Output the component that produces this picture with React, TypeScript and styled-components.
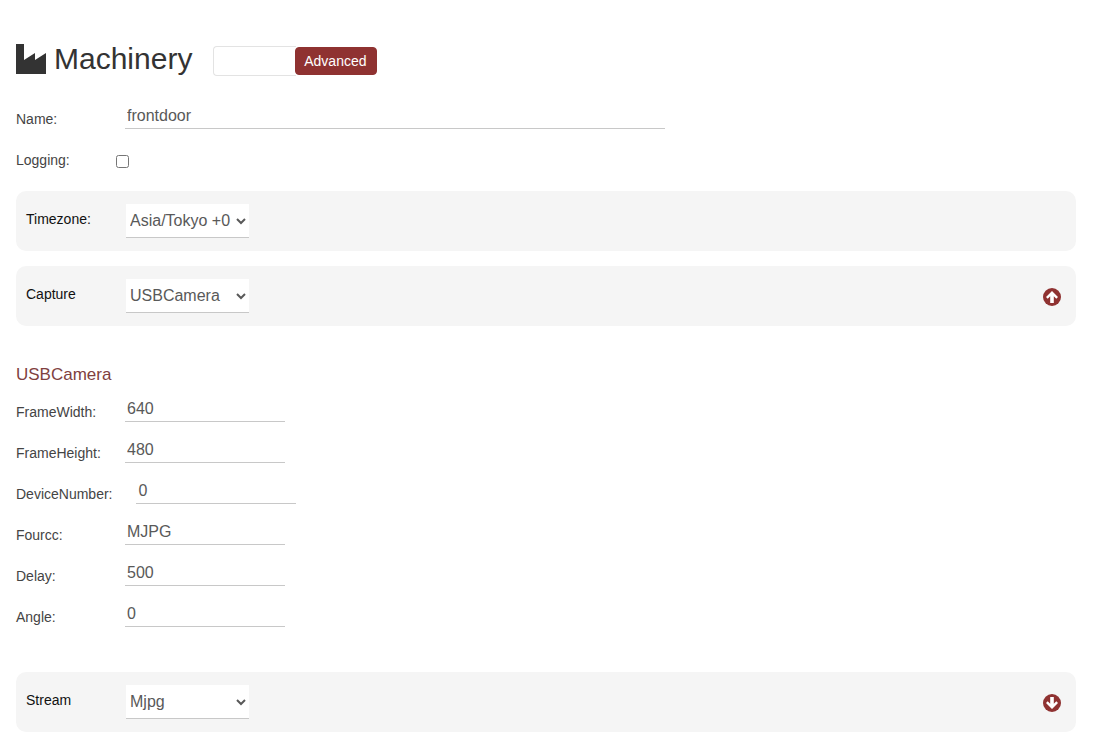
import React from "react";
import styled, { createGlobalStyle } from "styled-components";

const Global = createGlobalStyle`
  html, body { margin: 0; padding: 0; background: #fff; }
  body { font-family: "Liberation Sans", Arial, sans-serif; color: #333; overflow: hidden; }
  * { box-sizing: border-box; }
`;

const Page = styled.div`
  width: 1109px;
  height: 737px;
  padding: 43px 33px 0 16px;
  display: flex;
  flex-direction: column;
`;

const Header = styled.div`
  display: flex;
  align-items: center;
  height: 32px;
  margin-bottom: 27px;
`;

const FactoryIcon = styled.svg`
  display: block;
  flex: none;
  width: 30px;
  height: 30px;
`;

const Title = styled.h1`
  margin: 0 0 0 8px;
  font-size: 30px;
  font-weight: 400;
  line-height: 32px;
  color: #333;
`;

const AdvancedGroup = styled.div`
  display: flex;
  align-items: center;
  margin: 4px 0 0 21px;
`;

const GroupInput = styled.div`
  width: 83px;
  height: 30px;
  border: 1px solid #e3e3e3;
  border-right: none;
  border-radius: 4px 0 0 4px;
  background: #fff;
`;

const AdvancedButton = styled.button`
  width: 82px;
  height: 28px;
  margin-left: -1px;
  padding: 0 2px 0 0;
  border: 1px solid #8f3231;
  border-radius: 4px;
  background: #8f3231;
  color: #fff;
  font: 400 14px "Liberation Sans", Arial, sans-serif;
`;

const Row = styled.div<{ $mb?: number }>`
  display: flex;
  align-items: flex-end;
  height: 27px;
  margin-bottom: ${(p) => p.$mb ?? 14}px;
`;

const Label = styled.label`
  min-width: 85px;
  margin-right: 24px;
  padding-bottom: 2px;
  font-size: 14px;
  line-height: 16px;
  color: #444;
`;

const TextInput = styled.input<{ $w?: number }>`
  width: ${(p) => p.$w ?? 160}px;
  height: 27px;
  padding: 2px 2px 0 2px;
  border: none;
  border-bottom: 1px solid #c8c8c8;
  outline: none;
  background: transparent;
  color: #595959;
  font: 400 16px "Liberation Sans", Arial, sans-serif;
`;

const LoggingRow = styled.div`
  display: flex;
  align-items: center;
  height: 20px;
  margin-bottom: 20px;
`;

const Check = styled.input`
  width: 13px;
  height: 13px;
  margin: 1px 0 0 -9px;
`;

const Panel = styled.div<{ $mb?: number }>`
  display: flex;
  align-items: center;
  height: 60px;
  margin-bottom: ${(p) => p.$mb ?? 15}px;
  padding: 0 15px 0 10px;
  border-radius: 10px;
  background: #f5f5f5;
`;

const PanelLabel = styled.label`
  width: 76px;
  margin-right: 24px;
  margin-bottom: 4px;
  font-size: 14px;
  line-height: 16px;
  color: #111;
`;

const Select = styled.select`
  width: 123px;
  height: 34px;
  padding: 0;
  border: none;
  border-bottom: 1px solid #c8c8c8;
  border-radius: 0;
  outline: none;
  background: #fff;
  color: #595959;
  font: 400 16px "Liberation Sans", Arial, sans-serif;
`;

const ToggleIcon = styled.svg`
  display: block;
  width: 18px;
  height: 18px;
  margin-left: auto;
  margin-top: 2px;
`;

const SectionTitle = styled.h5`
  margin: 39px 0 0;
  font-size: 17px;
  font-weight: 400;
  line-height: 20px;
  color: #7f4140;
`;

const Fields = styled.div`
  margin-top: 10px;
  margin-bottom: 45px;
  & > :last-child { margin-bottom: 0; }
`;

const fields = [
  ["FrameWidth:", "640"],
  ["FrameHeight:", "480"],
  ["DeviceNumber:", "0"],
  ["Fourcc:", "MJPG"],
  ["Delay:", "500"],
  ["Angle:", "0"],
];

const IndustryIcon = () => (
  <FactoryIcon viewBox="0 0 30 30">
    <path d="M0 0H8V16L19 9V16L30 9V30H0Z" fill="#333" />
  </FactoryIcon>
);

const CircleArrow = ({ down }: { down?: boolean }) => (
  <ToggleIcon viewBox="0 0 18 18">
    <circle cx="9" cy="9" r="9" fill="#8f3231" />
    <path
      d="M9 3L15 9L13.3 10.7L10.8 8.2V15H7.2V8.2L4.7 10.7L3 9Z"
      fill="#fff"
      transform={down ? "rotate(180 9 9)" : undefined}
    />
  </ToggleIcon>
);

export default function App() {
  return (
    <>
      <Global />
      <Page>
        <Header>
          <IndustryIcon />
          <Title>Machinery</Title>
          <AdvancedGroup>
            <GroupInput />
            <AdvancedButton>Advanced</AdvancedButton>
          </AdvancedGroup>
        </Header>
        <Row $mb={22}>
          <Label>Name:</Label>
          <TextInput $w={540} defaultValue="frontdoor" />
        </Row>
        <LoggingRow>
          <Label>Logging:</Label>
          <Check type="checkbox" />
        </LoggingRow>
        <Panel>
          <PanelLabel>Timezone:</PanelLabel>
          <Select defaultValue="a">
            <option value="a">Asia/Tokyo +0</option>
          </Select>
        </Panel>
        <Panel $mb={0}>
          <PanelLabel>Capture</PanelLabel>
          <Select defaultValue="a">
            <option value="a">USBCamera</option>
          </Select>
          <CircleArrow />
        </Panel>
        <SectionTitle>USBCamera</SectionTitle>
        <Fields>
          {fields.map(([l, v]) => (
            <Row key={l}>
              <Label>{l}</Label>
              <TextInput defaultValue={v} />
            </Row>
          ))}
        </Fields>
        <Panel $mb={0}>
          <PanelLabel>Stream</PanelLabel>
          <Select defaultValue="a">
            <option value="a">Mjpg</option>
          </Select>
          <CircleArrow down />
        </Panel>
      </Page>
    </>
  );
}
